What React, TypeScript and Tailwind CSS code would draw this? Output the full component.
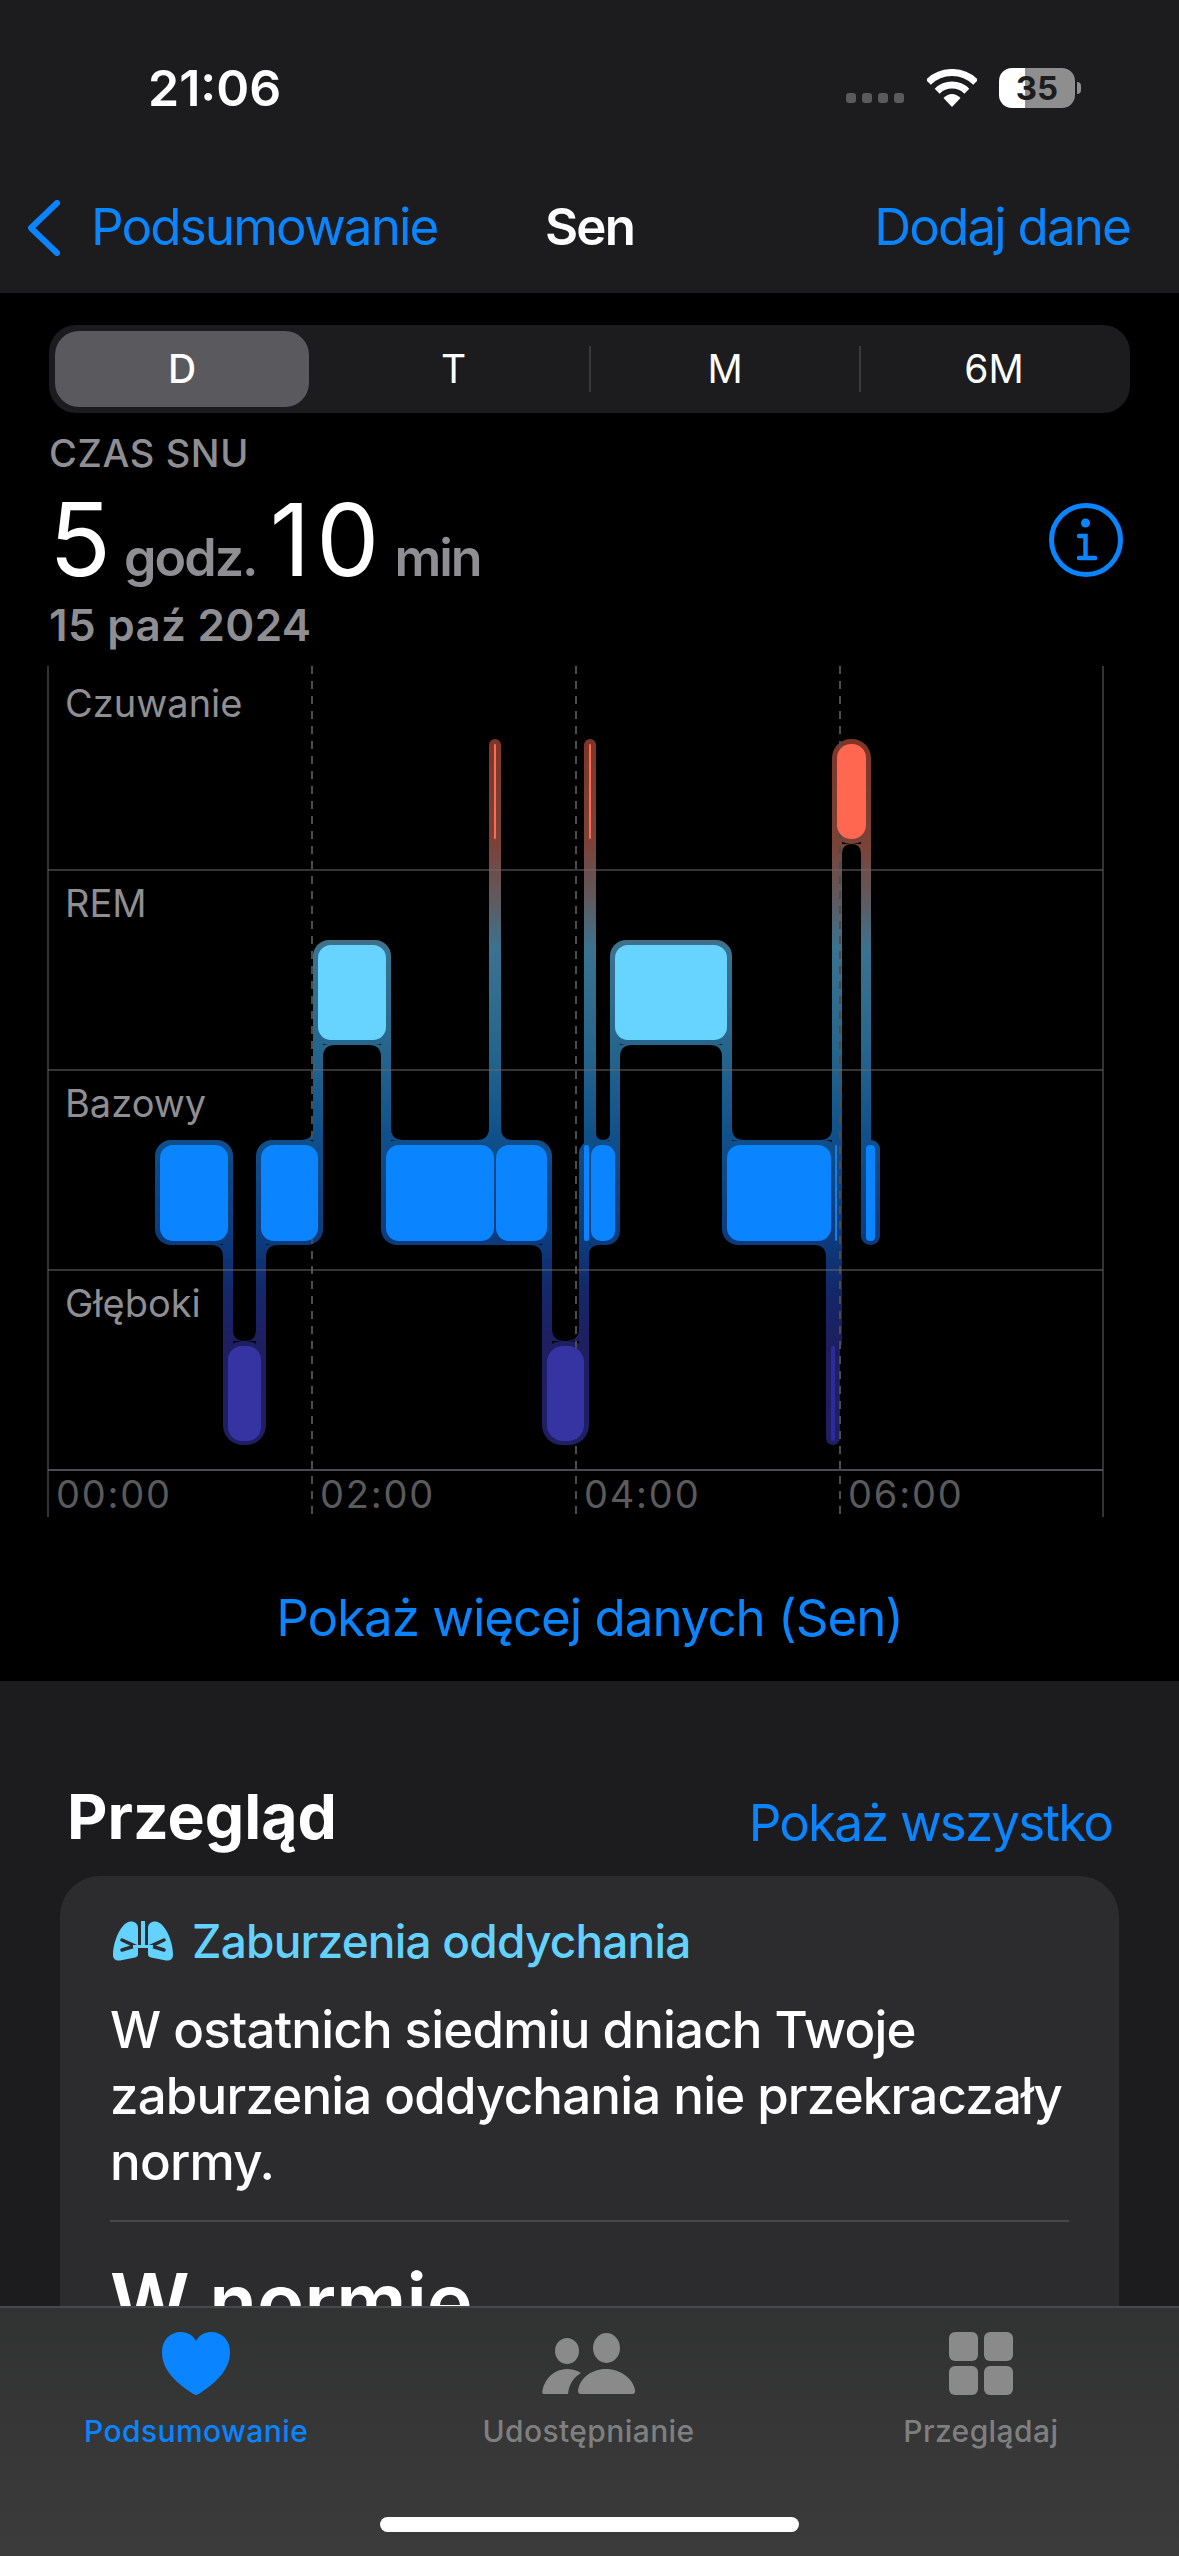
import React from "react";

// chart coordinates are in page pixels, the svg viewBox starts at y=660
const BANDS = {
  awake: [739, 844],
  rem: [940, 1045],
  base: [1140, 1245],
  deep: [1341, 1445],
};

const HALOS: [number, number, number, number, number][] = [
  [489, 739, 12, 105, 6],
  [584, 739, 12, 105, 6],
  [832, 739, 39, 105, 19],
  [313, 940, 78, 105, 16],
  [610, 940, 122, 105, 16],
  [155, 1140, 78, 105, 16],
  [256, 1140, 67, 105, 16],
  [381, 1140, 171, 105, 16],
  [579, 1140, 41, 105, 14],
  [722, 1140, 118, 105, 16],
  [861, 1140, 19, 105, 9],
  [223, 1341, 43, 104, 20],
  [542, 1341, 47, 104, 20],
  [826, 1341, 14, 104, 7],
];

// x, y top, width, y bottom
const CONNECTORS: [number, number, number, number][] = [
  [223, 1225, 10, 1360],
  [256, 1225, 10, 1360],
  [313, 1025, 10, 1160],
  [381, 1025, 10, 1160],
  [489, 824, 12, 1160],
  [542, 1225, 10, 1360],
  [579, 1225, 10, 1360],
  [584, 824, 12, 1160],
  [610, 1025, 10, 1160],
  [722, 1025, 10, 1160],
  [826, 1225, 10, 1360],
  [832, 824, 10, 1345],
  [861, 824, 10, 1160],
];

// corner x, corner y, horizontal direction, vertical direction, radius
const FILLETS: [number, number, number, number, number][] = [
  [223, 1245, -1, 1, 12],
  [233, 1341, 1, -1, 11.5],
  [256, 1341, -1, -1, 11.5],
  [266, 1245, 1, 1, 12],
  [313, 1140, -1, -1, 12],
  [323, 1045, 1, 1, 12],
  [381, 1045, -1, 1, 12],
  [391, 1140, 1, -1, 12],
  [489, 1140, -1, -1, 12],
  [501, 1140, 1, -1, 12],
  [542, 1245, -1, 1, 12],
  [552, 1341, 1, -1, 13],
  [579, 1341, -1, -1, 13],
  [589, 1245, 1, 1, 10],
  [596, 1140, 1, -1, 7],
  [610, 1140, -1, -1, 7],
  [620, 1045, 1, 1, 12],
  [722, 1045, -1, 1, 12],
  [732, 1140, 1, -1, 12],
  [832, 1140, -1, -1, 12],
  [826, 1245, -1, 1, 12],
  [842, 844, 1, 1, 9.5],
  [861, 844, -1, 1, 9.5],
];

const BLOCKS: [number, number, number, number, number, string][] = [
  [494, 744, 2, 95, 1, "#ff6b52"],
  [589, 744, 2, 95, 1, "#ff6b52"],
  [837, 744, 29, 95, 14, "#ff6750"],
  [318, 945, 68, 95, 13, "#66d4ff"],
  [615, 945, 112, 95, 13, "#66d4ff"],
  [160, 1145, 68, 96, 13, "#0a84ff"],
  [261, 1145, 57, 96, 13, "#0a84ff"],
  [386, 1145, 108, 96, 13, "#0a84ff"],
  [496, 1145, 51, 96, 13, "#0a84ff"],
  [584, 1145, 5, 96, 2, "#0a84ff"],
  [591, 1145, 24, 96, 10, "#0a84ff"],
  [727, 1145, 104, 96, 13, "#0a84ff"],
  [835, 1145, 2, 96, 1, "#1c7ce0"],
  [866, 1145, 9, 96, 4, "#0a84ff"],
  [228, 1346, 33, 95, 14, "#3634a3"],
  [547, 1346, 37, 95, 16, "#3634a3"],
  [831, 1346, 4, 95, 2, "#2d2b9b"],
];

const GRADIENT_STOPS: [number, string][] = [
  [739, "#7d3528"],
  [844, "#7a4238"],
  [900, "#5f5a60"],
  [950, "#3a7390"],
  [1045, "#27668c"],
  [1100, "#185a8c"],
  [1140, "#0f4f8a"],
  [1245, "#0c3a7c"],
  [1290, "#13286a"],
  [1341, "#1e1f60"],
  [1445, "#1f1f63"],
];

function SleepChart() {
  const top = BANDS.awake[0];
  const span = BANDS.deep[1] - top;
  return (
    <svg width={1179} height={860} viewBox="0 660 1179 860" className="block">
      <defs>
        <linearGradient id="sleepGrad" gradientUnits="userSpaceOnUse" x1="0" y1={top} x2="0" y2={BANDS.deep[1]}>
          {GRADIENT_STOPS.map(([y, color]) => (
            <stop key={y} offset={(y - top) / span} stopColor={color} />
          ))}
        </linearGradient>
      </defs>

      <g fill="url(#sleepGrad)">
        {CONNECTORS.map(([x, y1, w, y2]) => (
          <rect key={`${x}-${y1}`} x={x} y={y1} width={w} height={y2 - y1} />
        ))}
        {HALOS.map(([x, y, w, h, r]) => (
          <rect key={`${x}-${y}`} x={x} y={y} width={w} height={h} rx={r} />
        ))}
        {FILLETS.map(([x, y, dx, dy, r]) => (
          <path key={`${x}-${y}-${dx}`} d={`M${x + dx * r} ${y} Q${x} ${y} ${x} ${y + dy * r} L${x} ${y} Z`} />
        ))}
      </g>

      {/* grid */}
      <line x1={48} x2={48} y1={666} y2={1517} stroke="#444446" strokeWidth={1.5} />
      <line x1={1103} x2={1103} y1={666} y2={1517} stroke="#444446" strokeWidth={1.5} />
      {[312, 576, 840].map((x) => (
        <line key={x} x1={x} x2={x} y1={666} y2={1517} stroke="#4c4c4e" strokeWidth={2} strokeDasharray="8 7" />
      ))}
      {[870, 1070, 1270].map((y) => (
        <line key={y} x1={48} x2={1103} y1={y} y2={y} stroke="#6a6a6c" strokeWidth={1} />
      ))}
      <line x1={48} x2={1103} y1={1470} y2={1470} stroke="#666668" strokeWidth={1.5} />

      {BLOCKS.map(([x, y, w, h, r, color]) => (
        <rect key={`${x}-${y}`} x={x} y={y} width={w} height={h} rx={r} fill={color} />
      ))}

      <g fill="#8e8e93" fontSize={38}>
        <text x={65} y={717}>Czuwanie</text>
        <text x={65} y={917}>REM</text>
        <text x={65} y={1117}>Bazowy</text>
        <text x={65} y={1317}>Głęboki</text>
      </g>
      <g fill="#5a5a5c" fontSize={38} style={{ letterSpacing: "1.8px" }}>
        <text x={56} y={1508}>00:00</text>
        <text x={320} y={1508}>02:00</text>
        <text x={584} y={1508}>04:00</text>
        <text x={848} y={1508}>06:00</text>
      </g>
    </svg>
  );
}

function WifiIcon() {
  return (
    <svg width={50} height={38} viewBox="0 0 50 38">
      <g fill="none" stroke="#fff" strokeWidth={7}>
        <path d="M1.3 13.3 A33.5 33.5 0 0 1 48.7 13.3" />
        <path d="M10.2 22.2 A21 21 0 0 1 39.8 22.2" />
      </g>
      <path d="M25 38 L16.5 29 Q25 21 33.5 29 Z" fill="#fff" />
    </svg>
  );
}

function InfoIcon() {
  return (
    <svg width={74} height={74} viewBox="0 0 74 74" fill="none" stroke="#0a84ff" strokeLinecap="round">
      <circle cx={37} cy={37} r={34.5} strokeWidth={5} />
      <circle cx={36.5} cy={20} r={4.5} fill="#0a84ff" stroke="none" />
      <path d="M30 33 H36.5 V55 M30 55 H46" strokeWidth={4.5} />
    </svg>
  );
}

function LungsIcon() {
  const lobe = "M18 0.5 C22 0.5 25 3 25 7 V33 C25 35 24 36 22 36.5 L7 39.5 C3 40 0 38 0 34 C0 24 4 12 10 5 C12.5 2 15 0.5 18 0.5Z";
  return (
    <svg width={60} height={42} viewBox="0 0 60 40">
      <g fill="#64d2ff">
        <path d={lobe} />
        <path d={lobe} transform="translate(60 0) scale(-1 1)" />
      </g>
      <g fill="none" stroke="#2c2c2e" strokeWidth={3.5} strokeLinecap="round">
        <path d="M9 19 L22 25 L9 29" />
        <path d="M51 19 L38 25 L51 29" />
      </g>
      <path d="M28 0 H32 V24 H40 V27 H20 V24 H28 Z" fill="#64d2ff" />
    </svg>
  );
}

function HeartIcon() {
  return (
    <svg width={68} height={63} viewBox="0 0 68 63">
      <path
        fill="#0a84ff"
        d="M34 63 C33 63 31 62 29 60.5 C12 49 0 37 0 20 C0 8 8 0 19 0 C26 0 31 3.5 34 9 C37 3.5 42 0 49 0 C60 0 68 8 68 20 C68 37 56 49 39 60.5 C37 62 35 63 34 63Z"
      />
    </svg>
  );
}

function PeopleIcon() {
  return (
    <svg width={95} height={62} viewBox="0 0 95 62" fill="#8a8a8a">
      <ellipse cx={26} cy={18} rx={12} ry={13} />
      <ellipse cx={65.5} cy={15} rx={13.5} ry={15} />
      <path d="M3 61 C1 61 1 59 1.5 57 C4 45 14 36 26 36 C31 36 36 37.5 40 40 C33 44 28 51 27 61 Z" />
      <path d="M40 61 C38 61 37 60 37 58 C38 46 50 36 65 36 C80 36 92 46 94 57 C94.5 60 93 61 91 61 Z" />
    </svg>
  );
}

function Tab({ icon, label, active }: { icon: React.ReactNode; label: string; active?: boolean }) {
  return (
    <div className="flex flex-col items-center">
      <div className="h-[63px] flex items-center">{icon}</div>
      <span className={`mt-[18px] text-[30px] leading-[36px] font-medium tracking-[0.4px] ${active ? "text-[#0a84ff]" : "text-[#7f7f7f]"}`}>{label}</span>
    </div>
  );
}

export default function App() {
  return (
    <div className="relative w-[1179px] h-[2556px] overflow-hidden bg-[#1c1c1e] font-[Inter,sans-serif] text-white flex flex-col">
      {/* status bar */}
      <div className="h-[176px] flex items-center justify-between pl-[148px] pr-[98px]">
        <span className="text-[50px] font-semibold leading-none">21:06</span>
        <div className="flex items-center">
          <div className="flex gap-[6px] mt-[20px]">
            <div className="w-[10px] h-[10px] rounded-[3px] bg-[#5a5a5c]" />
            <div className="w-[10px] h-[10px] rounded-[3px] bg-[#5a5a5c]" />
            <div className="w-[10px] h-[10px] rounded-[3px] bg-[#5a5a5c]" />
            <div className="w-[10px] h-[10px] rounded-[3px] bg-[#5a5a5c]" />
          </div>
          <div className="ml-[23px]">
            <WifiIcon />
          </div>
          <div className="ml-[22px] w-[76px] h-[40px] rounded-[13px] bg-[linear-gradient(90deg,#ffffff_26px,#8e8e8e_26px)] flex items-center justify-center text-[33px] font-bold text-[#1c1c1e] leading-none">
            35
          </div>
          <div className="ml-[2px] w-[4px] h-[12px] rounded-r-[4px] bg-[#8e8e8e]" />
        </div>
      </div>

      {/* nav */}
      <div className="h-[117px] pb-[14px] flex items-center justify-between relative pl-[28px] pr-[49px] text-[51px] text-[#0a84ff] tracking-[-1.8px]">
        <div className="flex items-center gap-[31px]">
          <svg width={32} height={56} viewBox="0 0 32 56" fill="none" stroke="#0a84ff" strokeWidth={6} strokeLinecap="round" strokeLinejoin="round">
            <path d="M29 3 L3 28 L29 53" />
          </svg>
          <span>Podsumowanie</span>
        </div>
        <span className="absolute left-0 right-0 text-center text-white font-semibold pointer-events-none">Sen</span>
        <span>Dodaj dane</span>
      </div>

      {/* black content */}
      <div className="h-[1388px] shrink-0 bg-black pt-[32px]">
        <div className="ml-[49px] w-[1081px] h-[88px] rounded-[27px] bg-[#1c1c1e] flex items-center px-[6px] text-[39px]">
          <div className="w-[254px] h-[76px] rounded-[24px] bg-[#5a5a5e] flex items-center justify-center font-medium">D</div>
          <div className="w-[280px] pl-[9px] text-center">T</div>
          <div className="w-[2px] h-[46px] bg-[#3a3a3c]" />
          <div className="w-[268px] text-center">M</div>
          <div className="w-[2px] h-[46px] bg-[#3a3a3c]" />
          <div className="flex-1 pl-[3px] text-center">6M</div>
        </div>

        <div className="h-[247px] pl-[49px] pr-[56px] flex items-start justify-between">
          <div>
            <div className="mt-[17px] text-[38px] leading-[46px] font-medium tracking-[0.6px] text-[#8e8e93]">CZAS SNU</div>
            <div className="mt-[13px] flex items-baseline h-[100px] leading-[100px]">
              <span className="text-[102px] font-normal">5</span>
              <span className="ml-[13px] text-[52px] font-semibold tracking-[-2px] text-[#8e8e93]">godz.</span>
              <span className="ml-[13px] text-[100px] font-normal tracking-[6px]">10</span>
              <span className="ml-[9px] text-[52px] font-semibold tracking-[-2px] text-[#8e8e93]">min</span>
            </div>
            <div className="mt-[10px] text-[44px] leading-[52px] font-semibold tracking-[0.3px] text-[#8e8e93]">15 paź 2024</div>
          </div>
          <div className="mt-[90px]">
            <InfoIcon />
          </div>
        </div>

        <SleepChart />

        <div className="mt-[67px] text-center text-[51px] leading-[62px] tracking-[-1px] text-[#0a84ff]">Pokaż więcej danych (Sen)</div>
      </div>

      {/* overview */}
      <div className="px-[60px] pt-[98px]">
        <div className="flex items-start justify-between pl-[7px] pr-[7px]">
          <span className="text-[62.5px] leading-[74px] font-bold">Przegląd</span>
          <span className="mt-[13px] text-[51px] leading-[62px] tracking-[-1.8px] text-[#0a84ff]">Pokaż wszystko</span>
        </div>
        <div className="mt-[22px] rounded-[40px] bg-[#2c2c2e] px-[50px] pt-[44px]">
          <div className="flex items-center gap-[19px] ml-[3px]">
            <LungsIcon />
            <span className="text-[46px] leading-[42px] font-medium tracking-[-0.8px] text-[#64d2ff]">Zaburzenia oddychania</span>
          </div>
          <p className="mt-[35px] text-[51px] leading-[66px] font-medium tracking-[-0.8px] whitespace-nowrap">
            W ostatnich siedmiu dniach Twoje
            <br />
            zaburzenia oddychania nie przekraczały
            <br />
            normy.
          </p>
          <div className="mt-[25px] h-[2px] bg-[#48484a]" />
          <div className="mt-[32px] text-[78px] leading-[96px] font-semibold">W normie</div>
        </div>
      </div>

      {/* tab bar */}
      <div className="absolute left-0 right-0 bottom-0 h-[250px] border-t-[2px] border-[#48484a] bg-linear-to-b from-[#313232] to-[#3a3b3a] pt-[24px]">
        <div className="grid grid-cols-3 pr-[2px]">
          <Tab icon={<HeartIcon />} label="Podsumowanie" active />
          <Tab icon={<PeopleIcon />} label="Udostępnianie" />
          <Tab
            icon={
              <div className="grid grid-cols-2 gap-x-[6px] gap-y-[5px]">
                <div className="w-[29px] h-[29px] rounded-[6px] bg-[#8a8a8a]" />
                <div className="w-[29px] h-[29px] rounded-[6px] bg-[#8a8a8a]" />
                <div className="w-[29px] h-[29px] rounded-[6px] bg-[#8a8a8a]" />
                <div className="w-[29px] h-[29px] rounded-[6px] bg-[#8a8a8a]" />
              </div>
            }
            label="Przeglądaj"
          />
        </div>
        <div className="absolute left-[380px] bottom-[24px] w-[419px] h-[15px] rounded-full bg-white" />
      </div>
    </div>
  );
}
